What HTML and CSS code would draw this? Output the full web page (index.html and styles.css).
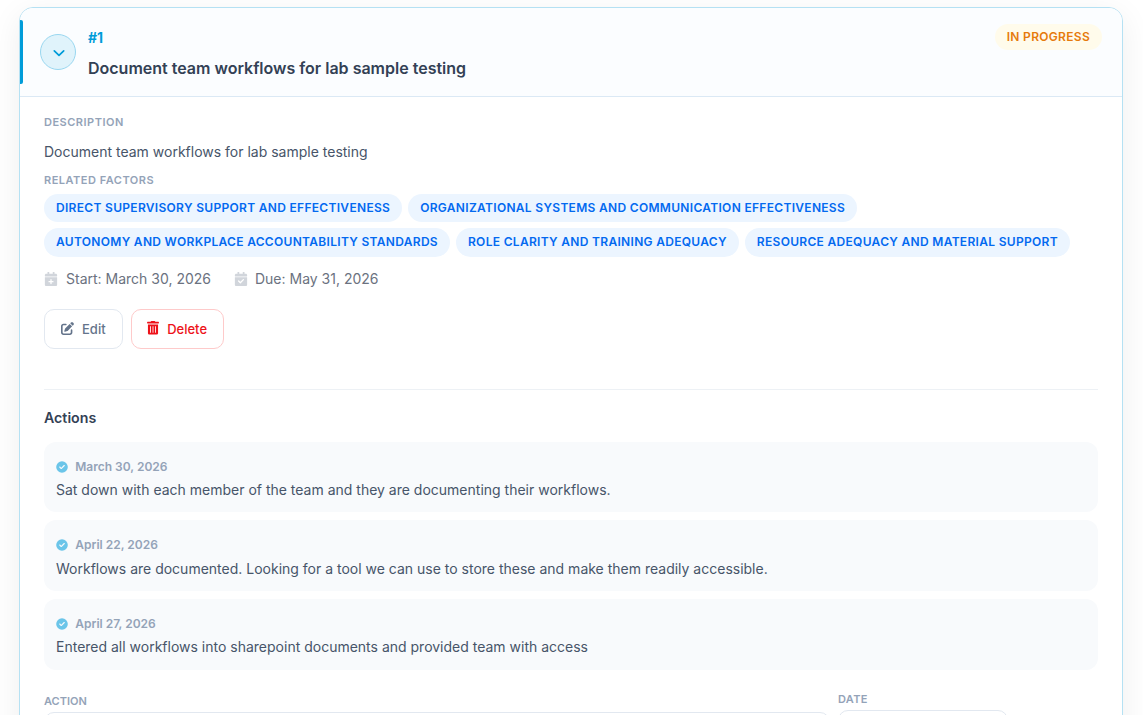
FILE: index.html
```
<!DOCTYPE html>
<html lang="en">
<head>
    <meta charset="UTF-8">
    <meta name="viewport" content="width=device-width, initial-scale=1.0">
    <title>Action Plan</title>
    <link rel="stylesheet" href="styles.css">
</head>
<body>
    <!-- shared icons -->
    <svg class="sprite" xmlns="http://www.w3.org/2000/svg">
        <symbol id="check-circle" viewBox="0 0 512 512">
            <path d="M256 8a248 248 0 1 0 0 496 248 248 0 0 0 0-496zm113 201L241 337a24 24 0 0 1-34 0l-64-64a24 24 0 0 1 34-34l47 47 111-111a24 24 0 0 1 34 34z"/>
        </symbol>
    </svg>

    <div class="card">
        <div class="card-header">
            <button class="toggle" aria-label="Collapse">
                <svg viewBox="0 0 12 12"><path d="M1.3 3.8 6 8.4l4.7-4.6"/></svg>
            </button>
            <div class="heading">
                <span class="number">#1</span>
                <h2>Document team workflows for lab sample testing</h2>
            </div>
            <span class="status">In Progress</span>
        </div>

        <div class="card-body">
            <div class="label">Description</div>
            <p class="description">Document team workflows for lab sample testing</p>
            <div class="label">Related Factors</div>
            <div class="tags">
                <span class="tag">Direct Supervisory Support and Effectiveness</span>
                <span class="tag">Organizational Systems and Communication Effectiveness</span>
                <span class="tag">Autonomy and Workplace Accountability Standards</span>
                <span class="tag">Role Clarity and Training Adequacy</span>
                <span class="tag">Resource Adequacy and Material Support</span>
            </div>

            <div class="dates">
                <span class="date">
                    <svg viewBox="0 0 448 512"><path d="M436 160H12c-6.600 0-12-5.400-12-12v-36c0-26.500 21.500-48 48-48h48V12c0-6.600 5.400-12 12-12h40c6.600 0 12 5.400 12 12v52h128V12c0-6.600 5.400-12 12-12h40c6.600 0 12 5.400 12 12v52h48c26.500 0 48 21.500 48 48v36c0 6.600-5.400 12-12 12zM12 192h424c6.600 0 12 5.400 12 12v260c0 26.500-21.500 48-48 48H48c-26.500 0-48-21.500-48-48V204c0-6.600 5.400-12 12-12zm308 160a24 24 0 0 0-24-24h-48v-48a24 24 0 0 0-48 0v48h-48a24 24 0 0 0 0 48h48v48a24 24 0 0 0 48 0v-48h48a24 24 0 0 0 24-24z"/></svg>
                    Start: March 30, 2026
                </span>
                <span class="date">
                    <svg viewBox="0 0 448 512"><path d="M436 160H12c-6.600 0-12-5.400-12-12v-36c0-26.500 21.500-48 48-48h48V12c0-6.600 5.400-12 12-12h40c6.600 0 12 5.400 12 12v52h128V12c0-6.600 5.400-12 12-12h40c6.600 0 12 5.400 12 12v52h48c26.500 0 48 21.500 48 48v36c0 6.600-5.400 12-12 12zM12 192h424c6.600 0 12 5.400 12 12v260c0 26.500-21.500 48-48 48H48c-26.500 0-48-21.500-48-48V204c0-6.600 5.400-12 12-12zm317 105a24 24 0 0 0-34-34L200 358l-47-47a24 24 0 0 0-34 34l64 64a24 24 0 0 0 34 0z"/></svg>
                    Due: May 31, 2026
                </span>
            </div>

            <div class="buttons">
                <button class="btn">
                    <svg class="icon-edit" viewBox="0 0 512 512"><path d="M471.600 21.700c-21.900-21.900-57.300-21.900-79.200 0L362.300 51.700l97.900 97.900 30.100-30.100c21.900-21.900 21.900-57.300 0-79.200L471.600 21.700zM172.400 241.700c-6.100 6.100-10.800 13.600-13.500 21.900l-29.600 88.800c-2.900 8.600-.6 18.100 5.800 24.600s15.900 8.700 24.600 5.800l88.800-29.600c8.200-2.700 15.700-7.400 21.900-13.500L437.700 172.300 339.700 74.300 172.400 241.700zM96 64C43 64 0 107 0 160V416c0 53 43 96 96 96H352c53 0 96-43 96-96V320c0-17.700-14.300-32-32-32s-32 14.300-32 32v96c0 17.700-14.300 32-32 32H96c-17.700 0-32-14.300-32-32V160c0-17.700 14.300-32 32-32h96c17.700 0 32-14.300 32-32s-14.300-32-32-32H96z"/></svg>
                    Edit
                </button>
                <button class="btn btn-delete">
                    <svg class="icon-trash" viewBox="0 0 448 512"><path d="M32 464a48 48 0 0 0 48 48h288a48 48 0 0 0 48-48V128H32zm272-256a16 16 0 0 1 32 0v224a16 16 0 0 1-32 0zm-96 0a16 16 0 0 1 32 0v224a16 16 0 0 1-32 0zm-96 0a16 16 0 0 1 32 0v224a16 16 0 0 1-32 0zM432 32H312l-9.400-18.700A24 24 0 0 0 281.100 0H166.800a23.720 23.720 0 0 0-21.400 13.300L136 32H16A16 16 0 0 0 0 48v32a16 16 0 0 0 16 16h416a16 16 0 0 0 16-16V48a16 16 0 0 0-16-16z"/></svg>
                    Delete
                </button>
            </div>

            <div class="actions">
                <h3>Actions</h3>
                <div class="action">
                    <div class="action-date"><svg><use href="#check-circle"/></svg>March 30, 2026</div>
                    <p>Sat down with each member of the team and they are documenting their workflows.</p>
                </div>
                <div class="action">
                    <div class="action-date"><svg><use href="#check-circle"/></svg>April 22, 2026</div>
                    <p>Workflows are documented. Looking for a tool we can use to store these and make them readily accessible.</p>
                </div>
                <div class="action">
                    <div class="action-date"><svg><use href="#check-circle"/></svg>April 27, 2026</div>
                    <p>Entered all workflows into sharepoint documents and provided team with access</p>
                </div>
            </div>

            <form class="action-form">
                <div class="field field-action">
                    <label for="action">Action</label>
                    <textarea id="action"></textarea>
                </div>
                <div class="field field-date">
                    <label for="date">Date</label>
                    <input id="date" type="text">
                </div>
            </form>
        </div>
    </div>
</body>
</html>
```
FILE: styles.css
```
* {
    box-sizing: border-box;
}

body {
    margin: 0;
    height: 715px;
    overflow: hidden;
    background-color: #fff;
    color: #475569;
    font-family: Inter, sans-serif;
    font-size: 14px;
    line-height: 1.7;
}

h2, h3, p {
    margin: 0;
}

svg {
    fill: currentColor;
    flex-shrink: 0;
}

button {
    font-family: inherit;
}

.sprite {
    display: none;
}

.card {
    width: 1104px;
    height: 860px;
    margin: 7px 0 0 19px;
    border: 1px solid #b5e1f3;
    border-radius: 14px;
    background-color: #fff;
    box-shadow: 0 8px 32px rgba(0, 20, 10, 0.07);
    overflow: hidden;
}

.card-header {
    position: relative;
    display: flex;
    align-items: center;
    gap: 12px;
    height: 89px;
    padding: 0 20px;
    background-color: #fbfdff;
    border-bottom: 1px solid #dbe9f5;
}

.card-header::before {
    content: "";
    position: absolute;
    left: 0;
    top: 12px;
    bottom: 12px;
    width: 3px;
    border-radius: 0 2px 2px 0;
    background-color: #009cd9;
}

.toggle {
    display: flex;
    align-items: center;
    justify-content: center;
    width: 36px;
    height: 36px;
    padding: 0;
    border: 1px solid #99d7f0;
    border-radius: 50%;
    background-color: #e0f3fb;
    color: #009cd9;
}

.toggle svg {
    width: 12px;
    height: 12px;
    margin: 1px 0 0 1px;
    fill: none;
    stroke: currentColor;
    stroke-width: 1.7;
    stroke-linecap: round;
    stroke-linejoin: round;
}

.heading {
    flex: 1;
    padding-top: 3px;
}

.number {
    display: block;
    color: #009cd9;
    font-size: 14px;
    font-weight: 700;
    line-height: 24px;
}

.heading h2 {
    margin-top: 5px;
    color: #334155;
    font-size: 16px;
    font-weight: 600;
    line-height: 27px;
}

.status {
    align-self: flex-start;
    margin-top: 16px;
    padding: 0 12px;
    border-radius: 13px;
    background-color: #fffbeb;
    color: #e67a0c;
    font-size: 12px;
    font-weight: 600;
    letter-spacing: 0.3px;
    line-height: 26px;
    text-transform: uppercase;
}

.card-body {
    padding: 16px 24px;
}

.label,
.field label {
    display: block;
    color: #94a3b8;
    font-size: 11px;
    font-weight: 600;
    letter-spacing: 0.5px;
    line-height: 18px;
    text-transform: uppercase;
}

.description {
    margin: 9px 0 7px;
    line-height: 24px;
}

.tags {
    display: flex;
    flex-wrap: wrap;
    gap: 6px;
    margin-top: 5px;
}

.tag {
    padding: 4px 12px;
    border-radius: 15px;
    background-color: #ecf5ff;
    color: #0369f0;
    font-size: 12px;
    font-weight: 600;
    letter-spacing: 0.308px;
    text-transform: uppercase;
}

.dates {
    display: flex;
    gap: 23px;
    margin-top: 10px;
    color: #6b7280;
    line-height: 24px;
}

.date {
    display: flex;
    align-items: center;
    gap: 8px;
}

.date svg {
    width: 14px;
    height: 14px;
    color: #d1d5db;
}

.date + .date {
    gap: 7px;
}

.buttons {
    display: flex;
    gap: 8px;
    margin-top: 18px;
}

.btn {
    display: flex;
    align-items: center;
    gap: 8px;
    height: 40px;
    padding: 0 16px;
    border: 1px solid #e2e8f0;
    border-radius: 10px;
    background-color: #fff;
    color: #64748b;
    font-size: 13px;
    font-weight: 500;
}

.btn-delete {
    gap: 8.6px;
    border-color: #fecaca;
    color: #ed1219;
}

.icon-edit {
    width: 13px;
    height: 13px;
    margin-bottom: 1px;
}

.icon-trash {
    width: 12px;
    height: 13.5px;
    margin: 0 0 2px -1px;
}

.actions {
    margin-top: 40px;
    padding-top: 16px;
    border-top: 1px solid #edf1f5;
}

.actions h3 {
    margin-bottom: 12px;
    color: #334155;
    font-size: 14.2px;
    font-weight: 600;
    line-height: 24px;
}

.action {
    height: 70.6px;
    margin-bottom: 8px;
    padding: 12px;
    border-radius: 12px;
    background-color: #f8fafc;
}

.action-date {
    display: flex;
    align-items: center;
    gap: 7.3px;
    padding-top: 1.8px;
    color: #94a3b8;
    font-size: 12px;
    font-weight: 600;
    line-height: 22px;
}

.action-date svg {
    width: 12px;
    height: 12px;
    color: #6bc5e9;
}

.action p {
    margin-top: 0.7px;
    line-height: 24px;
}

.action-form {
    display: flex;
    gap: 8px;
    margin-top: 20px;
}

.field-action {
    width: 786px;
    margin-top: 2px;
}

.field-date {
    width: 170px;
}

.field-action label {
    letter-spacing: 0;
}

.field-date label {
    letter-spacing: 0.3px;
}

.field textarea,
.field input {
    display: block;
    width: 100%;
    height: 40px;
    margin-top: 2px;
    border: 1px solid #e2e8f0;
    border-radius: 10px;
    background-color: #fff;
    resize: none;
}
```
